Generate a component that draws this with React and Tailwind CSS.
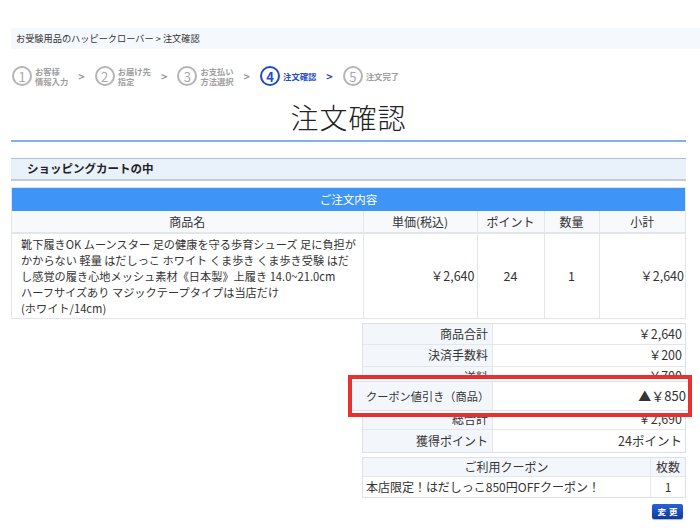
import React from 'react';

const font = { fontFamily: '"Noto Sans CJK JP", "Noto Sans", sans-serif' };

const steps = [
  { n: 1, lines: ['お客様', '情報入力'] },
  { n: 2, lines: ['お届け先', '指定'] },
  { n: 3, lines: ['お支払い', '方法選択'] },
  { n: 4, lines: ['注文確認'], active: true },
  { n: 5, lines: ['注文完了'] },
];

const summary = [
  ['商品合計', '￥2,640'],
  ['決済手数料', '￥200'],
  ['送料', '￥700'],
  ['クーポン値引き（商品）', '▲￥850'],
  ['総合計', '￥2,690'],
  ['獲得ポイント', '24ポイント'],
];

const Stepper = () => (
  <div className="flex items-center ml-[12px] mt-[16px] h-[22px]">
    {steps.map((s, i) => (
      <React.Fragment key={s.n}>
        <div className="flex items-center">
          <div
            className={`w-[20px] h-[20px] rounded-full border-2 flex items-center justify-center text-[13px] leading-none ${
              s.active ? 'border-[#1f4fbf] text-[#1f4fbf] font-bold' : 'border-[#b4b4b4] text-[#a8a8a8]'
            }`}
          >
            {s.n}
          </div>
          <div
            className={`ml-[3px] text-[8.3px] leading-[10.5px] font-bold ${
              s.active ? 'text-[#1f4fbf]' : 'text-[#a0a0a0]'
            }`}
          >
            {s.lines.map((l) => (
              <div key={l}>{l}</div>
            ))}
          </div>
        </div>
        {i < steps.length - 1 && (
          <span
            className={`mx-[10px] text-[11px] font-bold ${
              steps[i].active ? 'text-[#1f4fbf]' : 'text-[#9a9a9a]'
            }`}
          >
            &gt;
          </span>
        )}
      </React.Fragment>
    ))}
  </div>
);

export default function App() {
  return (
    <div className="w-[700px] h-[531px] bg-white overflow-hidden text-[#333]" style={font}>
      <div className="ml-[11px] mt-[28px] h-[21px] bg-[#f5f8fc] flex items-center pl-[5px] text-[9.2px] text-[#333]">
        お受験用品のハッピークローバー &gt; 注文確認
      </div>

      <Stepper />

      <div className="ml-[11px] w-[675px]">
        <h1 className="text-center text-[28px] font-light leading-[40px] mt-[10px] text-[#222] tracking-[1px]">注文確認</h1>
        <div className="h-[2px] bg-[#7fb2f0] mt-[3px]" />

        <div className="mt-[16px] h-[23px] bg-[#e9f1fb] border-t border-[#a9bfdc] border-b-2 border-b-[#c3cbd6] flex items-center pl-[16px] text-[11.5px] font-bold text-[#222]">
          ショッピングカートの中
        </div>

        <div className="mt-[6px] border border-[#e2e6ea]">
          <div className="h-[23px] bg-[#3f95f7] text-white text-[11.5px] flex items-center justify-center">ご注文内容</div>
          <table className="w-full table-fixed border-collapse text-[12px]">
            <colgroup>
              <col className="w-[351px]" />
              <col className="w-[114px]" />
              <col className="w-[67px]" />
              <col className="w-[55px]" />
              <col />
            </colgroup>
            <thead>
              <tr className="h-[22px] bg-[#f7f9fc]">
                <th className="font-normal border-r border-b-2 border-[#e3e7eb]">商品名</th>
                <th className="font-normal border-r border-b-2 border-[#e3e7eb]">単価(税込)</th>
                <th className="font-normal border-r border-b-2 border-[#e3e7eb]">ポイント</th>
                <th className="font-normal border-r border-b-2 border-[#e3e7eb]">数量</th>
                <th className="font-normal border-b-2 border-[#e3e7eb]">小計</th>
              </tr>
            </thead>
            <tbody>
              <tr className="h-[84px]">
                <td className="border-r border-[#e3e7eb] pl-[9px] pr-0 py-[2px] leading-[16px] whitespace-nowrap text-[11.2px]">
                  靴下履きOK ムーンスター 足の健康を守る歩育シューズ 足に負担が<br />
                  かからない 軽量 はだしっこ ホワイト くま歩き くま歩き受験 はだ<br />
                  し感覚の履き心地メッシュ素材《日本製》上履き 14.0~21.0cm<br />
                  ハーフサイズあり マジックテープタイプは当店だけ<br />
                  (ホワイト/14cm)
                </td>
                <td className="border-r border-[#e3e7eb] text-right pr-[2px] text-[12.5px]">￥2,640</td>
                <td className="border-r border-[#e3e7eb] text-center text-[12.5px]">24</td>
                <td className="border-r border-[#e3e7eb] text-center text-[12.5px]">1</td>
                <td className="text-right pr-[1px] text-[12.5px]">￥2,640</td>
              </tr>
            </tbody>
          </table>
        </div>

        <div className="relative">
          <div className="ml-auto w-[324px] mt-[4px] border border-[#dde2e8]">
            {summary.map(([label, value]) => (
              <div key={label} className="flex h-[21.3px] border-b border-[#e3e7eb] last:border-b-0 text-[12px]">
                <div className="w-[130px] bg-[#f3f7fc] border-r border-[#e3e7eb] flex items-center justify-end pr-[4px] whitespace-nowrap">{label}</div>
                <div className="flex-1 flex items-center justify-end pr-[3px] text-[12.5px]">{value}</div>
              </div>
            ))}
          </div>

          <div className="absolute left-[337px] top-[52px] w-[344px] h-[42px] border-4 border-[#e8302f] bg-white py-[2px]">
            <div className="flex h-full border-y border-[#dde2e8]">
              <div className="w-[141px] bg-[#f3f7fc] border-r border-[#e3e7eb] flex items-center pl-[14px] text-[11.2px] whitespace-nowrap">クーポン値引き（商品）</div>
              <div className="flex-1 flex items-center justify-end pr-[2px] text-[13px]">▲￥850</div>
            </div>
          </div>

          <div className="ml-auto w-[324px] mt-[4px] border border-[#dde2e8] text-[12px]">
            <div className="flex h-[19px] bg-[#f3f7fc] border-b border-[#e3e7eb]">
              <div className="flex-1 border-r border-[#e3e7eb] flex items-center justify-center">ご利用クーポン</div>
              <div className="w-[34px] flex items-center justify-center">枚数</div>
            </div>
            <div className="flex h-[20px]">
              <div className="flex-1 border-r border-[#e3e7eb] flex items-center pl-[3px]">本店限定！はだしっこ850円OFFクーポン！</div>
              <div className="w-[34px] flex items-center justify-center">1</div>
            </div>
          </div>

          <div className="flex justify-end mt-[6px] pr-[3px]">
            <button className="w-[31px] h-[15px] rounded-[2px] bg-gradient-to-b from-[#2a63d6] to-[#0d3a9e] text-white text-[8.5px] font-bold tracking-[3px] leading-none flex items-center justify-center pl-[3px] shadow-[0_1px_1px_rgba(0,0,0,0.3)]">
              変更
            </button>
          </div>
        </div>
      </div>
    </div>
  );
}
